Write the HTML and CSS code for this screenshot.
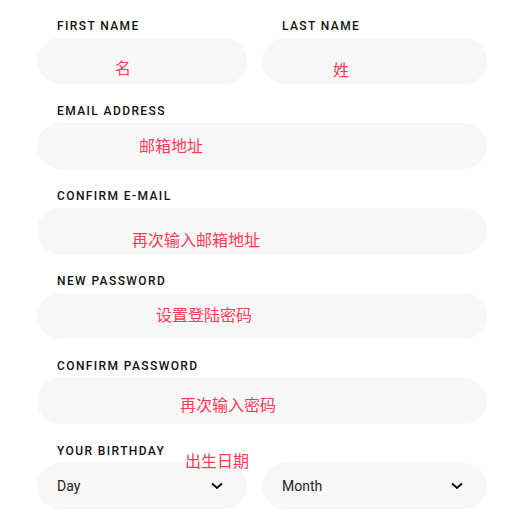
FILE: index.html
```html
<!DOCTYPE html>
<html lang="en">
<head>
<meta charset="utf-8">
<title>Register</title>
<link rel="stylesheet" href="styles.css">
</head>
<body>
<form class="form">
  <div class="row">
    <div class="field field-first">
      <label class="label">FIRST NAME</label>
      <div class="input"><span class="note note-first">名</span></div>
    </div>
    <div class="field field-last">
      <label class="label">LAST NAME</label>
      <div class="input"><span class="note note-last">姓</span></div>
    </div>
  </div>
  <div class="field">
    <label class="label">EMAIL ADDRESS</label>
    <div class="input"><span class="note note-email">邮箱地址</span></div>
  </div>
  <div class="field">
    <label class="label">CONFIRM E-MAIL</label>
    <div class="input"><span class="note note-email2">再次输入邮箱地址</span></div>
  </div>
  <div class="field">
    <label class="label">NEW PASSWORD</label>
    <div class="input"><span class="note note-pass">设置登陆密码</span></div>
  </div>
  <div class="field">
    <label class="label">CONFIRM PASSWORD</label>
    <div class="input"><span class="note note-pass2">再次输入密码</span></div>
  </div>
  <div class="field birthday">
    <label class="label">YOUR BIRTHDAY</label>
    <span class="note note-birth">出生日期</span>
    <div class="row">
      <div class="input select select-day">
        <span class="select-text">Day</span>
        <svg class="chev" width="12" height="8" viewBox="0 0 12 8"><path d="M1 1.5 L6 6 L11 1.5" fill="none" stroke="#111" stroke-width="2"/></svg>
      </div>
      <div class="input select select-month">
        <span class="select-text">Month</span>
        <svg class="chev" width="12" height="8" viewBox="0 0 12 8"><path d="M1 1.5 L6 6 L11 1.5" fill="none" stroke="#111" stroke-width="2"/></svg>
      </div>
    </div>
  </div>
</form>
</body>
</html>
```
FILE: styles.css
```css
html, body {
  margin: 0;
  padding: 0;
  background: #fff;
}
body {
  font-family: Roboto, "Noto Sans CJK SC", sans-serif;
}
.form {
  width: 450px;
  padding: 18px 0 0 37px;
  display: flex;
  flex-direction: column;
  gap: 19px;
}
.row {
  display: flex;
  gap: 15px;
}
.field {
  display: flex;
  flex-direction: column;
  position: relative;
}
.field-first { width: 210px; }
.field-last { width: 225px; }
.label {
  display: block;
  padding-left: 20px;
  font-size: 12px;
  line-height: 16px;
  font-weight: 500;
  letter-spacing: 1.4px;
  color: #111;
  margin-bottom: 4px;
}
.input {
  height: 46px;
  border-radius: 23px;
  background: #f7f7f7;
  position: relative;
}
.note {
  position: absolute;
  z-index: 1;
  font-family: "Noto Sans CJK SC", sans-serif;
  font-size: 16px;
  line-height: 16px;
  color: #fe3a57;
  white-space: nowrap;
}
.note-first { left: 78px; top: 21px; }
.note-last { left: 71px; top: 23px; }
.note-email { left: 102px; top: 14px; }
.note-email2 { left: 95px; top: 23px; }
.note-pass { left: 119px; top: 13px; }
.note-pass2 { left: 143px; top: 18px; }
.note-birth { left: 148px; top: 9px; }
.select {
  display: flex;
  align-items: center;
  justify-content: space-between;
  padding: 0 24px 0 20px;
}
.select-day { width: 166px; }
.select-month { width: 181px; }
.select-text {
  font-size: 14px;
  color: #222;
}
.chev { display: block; }
```
